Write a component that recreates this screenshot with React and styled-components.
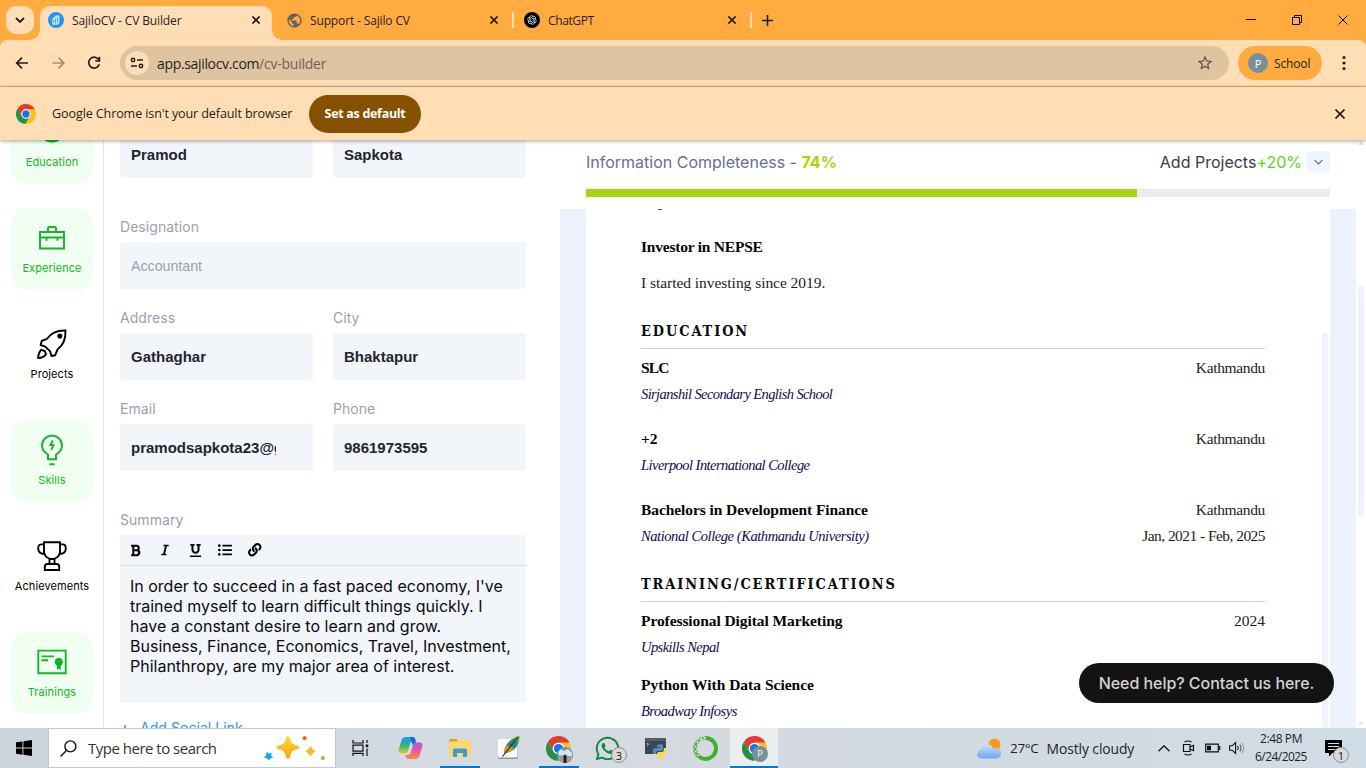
import React from 'react';
import styled, { createGlobalStyle, css } from 'styled-components';
import { FaBold, FaItalic, FaUnderline, FaListUl, FaLink, FaWhatsapp } from 'react-icons/fa';
import { MdPublic, MdStarBorder } from 'react-icons/md';
import { RiOpenaiFill } from 'react-icons/ri';
import { SiAnaconda } from 'react-icons/si';

const GlobalStyle = createGlobalStyle`
  *, *::before, *::after { box-sizing: border-box; }
  html, body { margin: 0; padding: 0; overflow: hidden; }
  svg { display: block; flex: none; }
`;

const ui = '"Open Sans", "Noto Sans", sans-serif';
const inter = 'Inter, "Liberation Sans", sans-serif';
const serif = '"Liberation Serif", serif';

const Screen = styled.div`
  width: 1366px;
  height: 768px;
  overflow: hidden;
  display: flex;
  flex-direction: column;
  background: #fff;
  font-family: ${ui};
`;

const Label = styled.span`
  font-size: ${p => p.$size || 12}px;
  letter-spacing: ${p => p.$ls || 0}px;
  color: ${p => p.$color || '#1f1f1f'};
  font-weight: ${p => p.$weight || 400};
  white-space: nowrap;
`;

/* ---------- browser chrome ---------- */

const TitleBar = styled.header`
  position: relative;
  z-index: 1;
  height: 40px;
  flex: none;
  display: flex;
  align-items: flex-start;
  background: #ffab40;
`;

const TabSearch = styled.button`
  width: 28px;
  height: 28px;
  margin: 6px 6px 0;
  padding: 0;
  border: 0;
  border-radius: 10px;
  background: #ffdeb5;
  display: grid;
  place-items: center;
`;

const Tab = styled.div`
  position: relative;
  height: 34px;
  width: ${p => p.$w}px;
  margin-top: 6px;
  padding: 0 0 6px ${p => p.$pad}px;
  display: flex;
  align-items: center;
  gap: ${p => p.$gap || 8}px;
  ${p => p.$active && css`
    background: #ffdeb5;
    border-radius: 10px 10px 0 0;
    &::before, &::after {
      content: '';
      position: absolute;
      bottom: 0;
      width: 10px;
      height: 10px;
    }
    &::before { left: -10px; background: radial-gradient(circle at 0 0, transparent 9.5px, #ffdeb5 10px); }
    &::after { right: -10px; background: radial-gradient(circle at 100% 0, transparent 9.5px, #ffdeb5 10px); }
  `}
`;

const TabClose = styled.span`
  margin-left: auto;
  margin-right: ${p => p.$right}px;
`;

const TabDivider = styled.span`
  width: 2px;
  height: 16px;
  margin-top: 12px;
  background: #ffdeb5;
`;

const NewTab = styled.span`
  margin: 15px 0 0 10px;
`;

const WindowButtons = styled.div`
  margin-left: auto;
  display: flex;
`;

const WindowButton = styled.span`
  width: 46px;
  height: 40px;
  display: grid;
  place-items: center;
`;

const Toolbar = styled.div`
  height: 47px;
  flex: none;
  display: flex;
  align-items: center;
  border-radius: 7px 7px 0 0;
  background: #ffdeb5;
  box-shadow: 0 -8px 0 #ffab40;
  border-bottom: 1px solid #ccb08d;
`;

const NavButton = styled.span`
  width: 36px;
  height: 36px;
  display: grid;
  place-items: center;
  color: ${p => (p.$muted ? '#a38e75' : '#1f1f1f')};
`;

const NavGroup = styled.div`
  display: flex;
  width: 120px;
  padding-left: 4px;
`;

const AddressBar = styled.div`
  width: 1109px;
  height: 34px;
  padding: 0 15px 0 5px;
  border-radius: 17px;
  background: #dfc4a1;
  display: flex;
  align-items: center;
`;

const SiteInfo = styled.span`
  width: 24px;
  height: 24px;
  margin-right: 8px;
  border-radius: 50%;
  background: #ffdeb5;
  display: grid;
  place-items: center;
`;

const Star = styled.span`
  margin-left: auto;
  color: #5b5349;
`;

const Profile = styled.div`
  width: 84px;
  height: 34px;
  margin: 0 13px 0 9px;
  padding-left: 10px;
  border-radius: 17px;
  background: #ffab40;
  display: flex;
  align-items: center;
  gap: 6px;
`;

const Avatar = styled.span`
  width: 20px;
  height: 20px;
  border-radius: 50%;
  background: #78909c;
  color: #fff;
  font-size: 11px;
  display: grid;
  place-items: center;
`;

const InfoBar = styled.div`
  position: relative;
  z-index: 3;
  height: 53px;
  flex: none;
  padding: 0 21px 0 16px;
  display: flex;
  align-items: center;
  background: #ffdeb5;
  box-shadow: 0 1px 4px rgba(0, 0, 0, 0.38);
`;

const InfoText = styled(Label)`
  width: 273px;
  padding-left: 16px;
`;

const DefaultButton = styled.button`
  width: 112px;
  height: 38px;
  padding: 0;
  border: 0;
  border-radius: 19px;
  background: #855100;
  color: #fff;
  font: 700 12.5px ${ui};
  letter-spacing: -0.3px;
`;

const InfoClose = styled.span`
  margin-left: auto;
`;

/* ---------- page ---------- */

const Page = styled.main`
  height: 588px;
  flex: none;
  display: flex;
  overflow: hidden;
  font-family: ${inter};
`;

const Sidebar = styled.nav`
  width: 104px;
  height: 588px;
  padding-left: 11px;
  border-right: 1px solid #e7e7ea;
  display: flex;
  flex-direction: column;
  gap: 24px;
  overflow: hidden;
`;

const Section = styled.div`
  width: 82px;
  height: 82px;
  flex: none;
  border-radius: 16px;
  background: ${p => (p.$done ? '#f0fff1' : 'transparent')};
  color: ${p => (p.$done ? '#16b427' : '#000')};
  display: flex;
  flex-direction: column;
  align-items: center;
  justify-content: flex-end;
  padding-bottom: 14px;
  gap: 7px;
  font-size: 11px;
  line-height: 16px;
  letter-spacing: 0.08px;
  white-space: nowrap;
  &:first-child { margin-top: -38px; }
`;

const SectionIcon = styled.span`
  height: 30px;
  display: flex;
  align-items: center;
`;

const Form = styled.form`
  width: 456px;
  height: 588px;
  padding: 0 34px 0 16px;
  overflow: hidden;
  display: flex;
  flex-direction: column;
`;

const FieldRow = styled.div`
  display: flex;
  flex: none;
  gap: 20px;
  margin-bottom: ${p => p.$after}px;
  &:first-child { margin-top: -9px; }
`;

const Field = styled.label`
  flex: 1;
  min-width: 0;
  display: flex;
  flex-direction: column;
  gap: 5px;
`;

const FieldName = styled.span`
  height: 20px;
  line-height: 20px;
  font-size: 14px;
  letter-spacing: 0.05px;
  color: #9a9fb2;
`;

const FieldBox = styled.span`
  height: 47px;
  padding: 0 37px 0 11px;
  border-radius: 3px;
  background: #f2f5fa;
  display: flex;
  align-items: center;
`;

const FieldValue = styled.span`
  width: 100%;
  overflow: hidden;
  white-space: nowrap;
  font: ${p => (p.$placeholder ? 400 : 700)} ${p => (p.$placeholder ? 14.2 : 15)}px "Liberation Sans", Arial, sans-serif;
  color: ${p => (p.$placeholder ? '#9a9fb2' : '#22252f')};
`;

const Editor = styled.div`
  height: 168px;
  flex: none;
  margin-top: 5px;
  background: #f2f5fa;
`;

const EditorTools = styled.div`
  height: 31px;
  padding-left: 8px;
  border-bottom: 1px solid #dadde2;
  display: flex;
  align-items: center;
`;

const Tool = styled.span`
  width: 30px;
  padding-left: ${p => p.$left || 0}px;
  display: flex;
  font-size: ${p => p.$size || 12}px;
`;

const EditorText = styled.p`
  margin: 0;
  padding: 10px 0 0 10px;
  font-size: 16px;
  line-height: 20px;
  color: #0b0b0d;
  white-space: nowrap;
`;

const AddLink = styled.a`
  margin-top: 15px;
  height: 20px;
  flex: none;
  display: flex;
  align-items: center;
  gap: 10px;
  color: #2b93f0;
  font-size: 14.1px;
  line-height: 20px;
  > svg { margin-top: 3px; }
`;

const Preview = styled.section`
  width: 796px;
  display: flex;
  flex-direction: column;
`;

const PreviewHead = styled.div`
  height: 69px;
  flex: none;
  padding: 11px 26px 0;
`;

const HeadRow = styled.div`
  height: 22px;
  display: flex;
  align-items: center;
  font-size: 16px;
  color: #6a6f8b;
`;

const Percent = styled.b`
  margin-left: 4.5px;
  font-weight: 700;
  color: #a5d610;
`;

const NextStep = styled.span`
  margin-left: auto;
  margin-right: 5px;
  color: #3a3b45;
  em { font-style: normal; color: #5bd51b; }
`;

const Expand = styled.span`
  width: 23px;
  height: 22px;
  border-radius: 4px;
  background: #eff6ff;
  display: grid;
  place-items: center;
`;

const Meter = styled.div`
  height: 8px;
  margin-top: 16px;
  background: linear-gradient(to right, #a5d610 551px, #e8ecef 551px);
`;

const Canvas = styled.div`
  height: 519px;
  padding: 0 26px;
  background: #eef2fc;
`;

const Paper = styled.article`
  height: 519px;
  background: #fff;
  display: flex;
  overflow: hidden;
  font-family: ${serif};
`;

const Cv = styled.div`
  width: 736px;
  height: 519px;
  padding: 0 57px 0 55px;
  display: flex;
  flex-direction: column;
`;

const PaperScroll = styled.span`
  width: 6px;
  margin-top: 124px;
  border-radius: 3px 3px 0 0;
  background: #eef3fc;
`;

const Clipped = styled.span`
  width: 4px;
  height: 1px;
  margin: 0 0 24px 17px;
  background: #55555c;
`;

const CvHeading = styled.h2`
  margin: 16px 0 6px;
  height: 37px;
  flex: none;
  border-bottom: 1px solid #d2d2d4;
  font: 700 14.4px/37px "DejaVu Serif Condensed", "DejaVu Serif", serif;
  letter-spacing: 1.93px;
  color: #08080a;
  white-space: nowrap;
`;

const CvLine = styled.div`
  height: ${p => p.$h || 26}px;
  flex: none;
  margin-top: ${p => p.$before || 0}px;
  line-height: 26px;
  display: flex;
  justify-content: space-between;
  font-size: 15.5px;
  color: #1d1d22;
  white-space: nowrap;
`;

const Strong = styled.b`
  color: #050507;
  letter-spacing: ${p => p.$ls || 0}px;
`;

const Place = styled.i`
  font-size: 14.5px;
  color: #0c0c4e;
  letter-spacing: ${p => p.$ls || 0}px;
`;

const Run = styled.span`
  letter-spacing: ${p => p.$ls || 0}px;
`;

const PageScroll = styled.div`
  width: 10px;
  height: 588px;
  padding: 1px 2px 2px;
  display: flex;
  flex-direction: column;
  align-items: center;
  justify-content: space-between;
`;

const PageThumb = styled.span`
  width: 6px;
  height: 231px;
  margin: 140px 0 auto;
  border-radius: 3px;
  background: #eef2fc;
`;

const HelpPill = styled.div`
  position: absolute;
  z-index: 4;
  left: 1079px;
  top: 663px;
  width: 255px;
  height: 40px;
  border-radius: 20px;
  background: #131313;
  color: #d3d3d3;
  font: 500 16px/40px ${inter};
  letter-spacing: -0.05px;
  text-align: center;
  white-space: nowrap;
`;

/* ---------- taskbar ---------- */

const Taskbar = styled.footer`
  height: 40px;
  flex: none;
  display: flex;
  background: linear-gradient(90deg, #ccd4de, #d5dbe1 35%, #d3d9df 60%, #d0dce6);
`;

const Slot = styled.div`
  position: relative;
  width: ${p => p.$w || 49}px;
  height: 40px;
  flex: none;
  display: flex;
  align-items: center;
  justify-content: center;
  background: ${p => (p.$active ? '#ebeff2' : 'transparent')};
  &::after {
    content: '';
    position: absolute;
    bottom: 0;
    left: 50%;
    width: ${p => p.$line || 0}px;
    height: 2px;
    transform: translateX(-50%);
    background: #0078d7;
  }
`;

const SearchBox = styled.div`
  width: 288px;
  height: 40px;
  padding: 0 10px 0 11px;
  border: 1px solid #c4c8cc;
  background: #fff;
  display: flex;
  align-items: center;
  gap: 11px;
  > svg:last-child { margin-left: auto; }
`;

const CountBadge = styled.span`
  position: absolute;
  right: ${p => p.$right}px;
  bottom: ${p => p.$bottom}px;
  width: 16px;
  height: 16px;
  border-radius: 50%;
  border: 1px solid #8e8e8e;
  background: #d9d9d9;
  color: #111;
  font-size: 11px;
  line-height: 1;
  display: grid;
  place-items: center;
`;

const UserBadge = styled(CountBadge)`
  border: 0;
  background: #78909c;
  color: #fff;
  font-size: 9.5px;
`;

const PhotoBadge = styled(CountBadge)`
  border: 0;
  overflow: hidden;
  background: none;
`;

const NoticeSlot = styled(Slot)`
  justify-content: flex-start;
  padding-left: 12px;
`;

const Tray = styled.div`
  margin-left: auto;
  display: flex;
  align-items: center;
`;

const Weather = styled.div`
  display: flex;
  align-items: center;
  width: 175px;
  gap: 8px;
`;

const Clock = styled.div`
  width: 64px;
  display: flex;
  flex-direction: column;
  align-items: center;
  line-height: 18px;
`;

/* ---------- drawings ---------- */

const Cross = ({ size = 8, w = 1.6, color = '#1f1f1f' }) => (
  <svg width={size} height={size} viewBox="0 0 8 8" fill="none" stroke={color} strokeWidth={w * 8 / size}>
    <path d="M.4.4l7.2 7.2M7.6.4L.4 7.6" />
  </svg>
);

const ChromeLogo = ({ size }) => (
  <svg width={size} height={size} viewBox="0 0 24 24">
    <path fill="#e33b2e" d="M12 6.5H22.7A12 12 0 0 0 1.7 5.9L7.24 14.75A5.5 5.5 0 0 1 12 6.5Z" />
    <path fill="#229342" d="M7.24 14.75L1.7 5.7A12 12 0 0 0 11.4 24l5.36-9.25a5.5 5.5 0 0 1-9.52 0Z" />
    <path fill="#fbc116" d="M16.76 14.75L11.4 24A12 12 0 0 0 22.6 6.5H12a5.5 5.5 0 0 1 4.76 8.25Z" />
    <circle cx="12" cy="12" r="5.6" fill="#fff" />
    <circle cx="12" cy="12" r="4.4" fill="#1a73e8" />
  </svg>
);

const SajiloIcon = () => (
  <svg width="16" height="16" viewBox="0 0 16 16">
    <circle cx="8" cy="8" r="8" fill="#2196f3" />
    <path d="M4.2 12.7V7.1L8 3.5h3.4v7.3l-1.8 2z" fill="#c9e6ff" />
    <path d="M5.7 11V7.6M7.5 11.5V6.5M9.4 10.8V5.4" stroke="#2196f3" strokeWidth=".8" />
  </svg>
);

const Tune = () => (
  <svg width="14" height="12" viewBox="0 0 14 12" fill="none" stroke="#1f1f1f" strokeWidth="1.5">
    <circle cx="3" cy="3" r="1.7" /><path d="M7 3h6M1 9h6" /><circle cx="11" cy="9" r="1.7" />
  </svg>
);

const Arrow = ({ flip }) => (
  <svg width="14" height="14" viewBox="0 0 14 14" fill="none" stroke="currentColor" strokeWidth="1.7">
    <path d={flip ? 'M1.500 7h11M7.500 1.700L12.800 7 7.500 12.300' : 'M13 7H2M7 1.700L1.700 7 7 12.300'} />
  </svg>
);

const Reload = () => (
  <svg width="14" height="14" viewBox="0 0 14 14" fill="none" stroke="currentColor" strokeWidth="1.7">
    <path d="M12 4.300A5.400 5.400 0 1 0 12.300 8.200M12.400.8v4.200H8.200" />
  </svg>
);

const Briefcase = () => (
  <svg width="28" height="26" viewBox="0 0 28 26" fill="none" stroke="currentColor" strokeWidth="1.9">
    <path d="M2 7h24v16.500H2zM2 12.500h24M10 7V3.600Q10 2 11.600 2h4.800Q18 2 18 3.600V7M8.500 12.500v3.300M19.500 12.500v3.300" />
  </svg>
);

const Rocket = () => (
  <svg width="30" height="30" viewBox="0 0 30 30" fill="none" stroke="currentColor" strokeWidth="1.9" strokeLinejoin="round">
    <path d="M28.500 1.500C21 1.200 14 4 10 9.800L4.800 11.800 3.600 16l4.600 1.600 5 4.800L14.400 27l3.800-.8 2.500-6C26.800 15.800 28.800 9.500 28.500 1.500Z" />
    <circle cx="22.800" cy="7" r="1.600" fill="currentColor" />
    <path d="M4.300 20.800C1.800 23 1.400 25.600 1 29c3.800-.2 6.400-1 8-3.800L7.800 22z" />
  </svg>
);

const Bulb = () => (
  <svg width="24" height="32" viewBox="0 0 24 32" fill="none" stroke="currentColor" strokeWidth="1.9">
    <path d="M8 25.300V20.600C4.200 18.400 2 15.400 2 11.600a10 10 0 0 1 20 0c0 3.800-2.200 6.800-6 9v4.700zM9.400 30.200h5.200" />
    <path d="M12.800 6.500l-2.300 4.600h3L11.200 15.800" />
  </svg>
);

const Trophy = () => (
  <svg width="30" height="30" viewBox="0 0 30 30" fill="none" stroke="currentColor" strokeWidth="1.9">
    <path d="M7 1.200h16v9.200c0 4.400-3.600 7.600-8 7.600s-8-3.200-8-7.600zM7 3.400H4.200C2 3.400 1.200 5 1.200 7.400c0 3.400 2.600 5.400 6.400 5.600M23 3.400h2.800c2.200 0 3 1.600 3 4 0 3.400-2.600 5.400-6.400 5.600M12.500 17.800v5M17.500 17.800v5M7.800 29v-3.400q0-2.600 2.600-2.600h9.200q2.600 0 2.600 2.600V29z" />
  </svg>
);

const Certificate = () => (
  <svg width="30" height="26" viewBox="0 0 30 26" fill="none" stroke="currentColor" strokeWidth="1.9">
    <path d="M1.300 1.600h27.400v22.600H1.300zM4.500 7.400H17M4.500 11.200h6.500" />
    <circle cx="21.800" cy="13" r="3.200" fill="currentColor" /><path d="M20.400 14v6.400l1.400-1.400 1.400 1.400V14" fill="currentColor" strokeWidth="1" />
  </svg>
);

const Cap = () => (
  <svg width="28" height="28" viewBox="0 0 28 28" fill="none" stroke="currentColor" strokeWidth="2">
    <circle cx="14" cy="12" r="11.500" /><path d="M8 21.500q6 2.500 12 0" strokeWidth="3" />
  </svg>
);

const WindowsLogo = () => (
  <svg width="16" height="16" viewBox="0 0 16 16">
    <path d="M0 2.300L6.500 1.400v6.200H0zM7.400 1.300L16 0v7.600H7.400zM0 8.500h6.500v6.200L0 13.800zM7.400 8.500H16V16l-8.600-1.200z" />
  </svg>
);

const Magnifier = () => (
  <svg width="17" height="17" viewBox="0 0 17 17" fill="none" stroke="#111" strokeWidth="1.4">
    <circle cx="10.400" cy="6.400" r="5.500" /><path d="M6.400 10.600L.6 16.400" />
  </svg>
);

const Sparkles = () => (
  <svg width="61" height="26" viewBox="0 0 61 26">
    <defs>
      <linearGradient id="gold" x1="0" y1="0" x2="0" y2="1">
        <stop offset="0" stopColor="#ffd83d" /><stop offset="1" stopColor="#f5a70c" />
      </linearGradient>
    </defs>
    <path fill="url(#gold)" d="M24 1q2 0 2.800 4.500 .8 3.500 4.400 4.500Q35.500 10.800 35.500 12.400t-4.300 2.400q-3.600 1-4.400 4.500-.8 4.500-2.800 4.500t-2.800-4.500q-.8-3.500-4.400-4.500-4.300-.8-4.300-2.400t4.300-2.400q3.600-1 4.400-4.500Q22 1 24 1Z" />
    <path fill="#fbb92a" d="M46.500 10.500q1.400 4.200 5.500 5.700-4.100 1.500-5.500 5.500-1.400-4-5.500-5.500 4.100-1.500 5.500-5.700Z" />
    <path fill="#14a7ea" d="M3.800 16.800l2.200 2 2.600-1-.4 3 2 2-2.800.5-1.400 2.500-1.500-2.400L1 22.700l1.800-2z" transform="translate(-1)" />
    <circle cx="40.600" cy="3.200" r="2.100" fill="#f1662b" />
    <circle cx="58.800" cy="23" r="2" fill="#80c342" />
  </svg>
);

const TaskView = () => (
  <svg width="17" height="16" viewBox="0 0 17 16" fill="none" stroke="#111" strokeWidth="1.2">
    <path d="M1 0v3h10V0M1 5.200h10v6H1zM1 16v-2.600h10V16M15 0v3M15 8.500V16" /><path d="M13.700 4.500h2.600v2.600h-2.600z" fill="#111" stroke="none" />
  </svg>
);

const Copilot = () => (
  <svg width="25" height="22" viewBox="0 0 25 22">
    <defs>
      <linearGradient id="cpA" x1="0" y1="0" x2="0" y2="1"><stop offset="0" stopColor="#1b9de8" /><stop offset=".5" stopColor="#25b58b" /><stop offset="1" stopColor="#f5c21a" /></linearGradient>
      <linearGradient id="cpB" x1="0" y1="0" x2="0" y2="1"><stop offset="0" stopColor="#a45cf0" /><stop offset=".5" stopColor="#ef5792" /><stop offset="1" stopColor="#ff8b43" /></linearGradient>
    </defs>
    <path fill="url(#cpA)" d="M8 0h6.500q2 0 2.600 2l.5 2h-3q-1.600 0-2.200 2l-2.500 8q-.8 2.500-3 2.500H3.500Q0 16.500.7 12.500L3.500 3Q4.500 0 8 0Z" />
    <path fill="url(#cpB)" d="M17 22h-6.500q-2 0-2.600-2l-.5-2h3q1.600 0 2.200-2l2.500-8q.8-2.500 3-2.500h3.400q3.500 0 2.800 4L21.500 19q-1 3-4.500 3Z" />
    <path fill="#1768d4" d="M12 0h2.500q2 0 2.600 2l.9 3.500q-2.400.2-3.200 3z" />
  </svg>
);

const Folder = () => (
  <svg width="22" height="19" viewBox="0 0 22 19">
    <path fill="#e0a018" d="M0 1q0-1 1-1h6.500l2 2.500H0z" />
    <path fill="#ffd766" d="M0 3h8l1.500-1.500H21q1 0 1 1V17q0 1-1 1H1q-1 0-1-1z" />
    <path fill="#3b9ae0" d="M4 18V11q0-1.500 1.500-1.500h11Q18 9.500 18 11v7h-4v-4H8v4z" />
  </svg>
);

const Feather = () => (
  <svg width="22" height="24" viewBox="0 0 22 24">
    <rect x="0" y="3" width="20" height="20" rx="1" fill="#8e9499" />
    <rect x="0" y="3" width="19.500" height="18.500" rx="1" fill="#fdfdfd" />
    <path d="M21.500 0q-8 2-12 7-3.500 4.500-3.500 10.500l2.500-.5q7-1.500 10-6.500Q21.500 6 21.500 0Z" fill="#58a829" />
    <path d="M15.500 3q-4.500 3-6.500 6.500l7.500 3q2.500-2.500 3.500-5.500z" fill="#247fa6" /><path d="M8.500 9.500q-2.500 4-2.500 8l2.500-.5q5-1.500 7-5z" fill="#e0902b" />
    <path d="M20 1L4.500 20.500" stroke="#2d3a1c" strokeWidth="1.200" fill="none" />
  </svg>
);

const PythonShell = () => (
  <svg width="23" height="23" viewBox="0 0 23 23">
    <path fill="#3a4750" d="M0 1h21v16H0z" /><path fill="#4e5f6b" d="M0 1h21v3H0z" /><path d="M2 6l1.500 1.200L2 8.500" stroke="#dfe5ea" fill="none" />
    <path fill="#4b8bc8" d="M12 8q3.500-1.500 6 0v4.500q0 1.500-1.500 1.500h-4Q11 14 11 16v1H8.500Q7 15 8 12.500q.5-1.500 2-1.500h5v-.7h-3z" />
    <path fill="#ffd94a" d="M18.800 11H21q1.500 2 .7 5-.5 1.500-2 1.500h-4v.7H18V21q-3 1.500-6 0v-4q0-2 1.500-2h3.500q1.800 0 1.800-2z" />
  </svg>
);

const ProfilePhoto = () => (
  <svg width="16" height="16" viewBox="0 0 16 16">
    <path d="M0 0h16v16H0z" fill="#5d93c9" />
    <path d="M1 5l3-3 3 2 4-2 4 4v4l-7-2-6 1z" fill="#d9e4ee" />
    <path d="M0 10l16-1v7H0z" fill="#b09a86" />
    <path d="M6.500 16V9.500L8 7l1.500 2.500V16z" fill="#16202e" />
  </svg>
);

const WeatherIcon = () => (
  <svg width="25" height="21" viewBox="0 0 25 21">
    <defs><linearGradient id="cloud" x1="0" y1="0" x2="0" y2="1"><stop offset="0" stopColor="#c7ddfd" /><stop offset="1" stopColor="#77a5ee" /></linearGradient></defs>
    <circle cx="17.500" cy="6.500" r="6" fill="#f79a1e" />
    <path fill="url(#cloud)" d="M4.800 11.500Q5.500 6.500 10.500 6.500q4.400 0 5.800 4.200 1-.7 2.400-.7 5.300.5 5.300 5.500 0 4.800-5 5H5Q0 20.300 0 16q0-4.200 4.800-4.500Z" />
  </svg>
);

const MeetNow = () => (
  <svg width="13" height="16" viewBox="0 0 13 16" fill="none" stroke="#111" strokeWidth="1.2">
    <path d="M1.500 4.500h6.500v7H1.500zM8 7l3.500-1.500v5L8 9M2.500 2Q6 0 9.500 2M2.500 14Q6 16 9.500 14" />
  </svg>
);

const Battery = () => (
  <svg width="16" height="10" viewBox="0 0 16 10" fill="none" stroke="#111" strokeWidth="1.2">
    <path d="M.7 1.200h12.600v7.600H.7zM14.700 3v4" /><path d="M2 2.700h4v4.600H2z" fill="#111" stroke="none" />
  </svg>
);

const Speaker = () => (
  <svg width="17" height="14" viewBox="0 0 17 14" fill="none" stroke="#111" strokeWidth="1.1">
    <path d="M.6 4.800h2.600L6.600 1.500v11L3.200 9.200H.6zM8.600 5q1.200 2 0 4" /><path d="M10.800 3.500q2.300 3.500 0 7" stroke="#555" /><path d="M13 2q3.500 5 0 10" stroke="#999" />
  </svg>
);

const Notice = () => (
  <svg width="17" height="17" viewBox="0 0 17 17">
    <path d="M0 0h17v13H7.500L4 16.500V13H0z" fill="#050505" /><path d="M3 3.500h11M3 6.500h11M3 9.500h7" stroke="#d0dce6" />
  </svg>
);

/* ---------- data ---------- */

const sections = [
  { name: 'Education', icon: <Cap />, done: true },
  { name: 'Experience', icon: <Briefcase />, done: true },
  { name: 'Projects', icon: <Rocket /> },
  { name: 'Skills', icon: <Bulb />, done: true },
  { name: 'Achievements', icon: <Trophy /> },
  { name: 'Trainings', icon: <Certificate />, done: true },
];

const TextField = ({ name, value, placeholder }) => (
  <Field>
    {name && <FieldName>{name}</FieldName>}
    <FieldBox><FieldValue $placeholder={!!placeholder}>{value || placeholder}</FieldValue></FieldBox>
  </Field>
);

export default function App() {
  return (
    <Screen>
      <GlobalStyle />
      <TitleBar>
        <TabSearch>
          <svg width="10" height="6" viewBox="0 0 10 6" fill="none" stroke="#1f1f1f" strokeWidth="1.8"><path d="M1 1l4 4 4-4" /></svg>
        </TabSearch>
        <Tab $w={232} $pad={8} $active>
          <SajiloIcon />
          <Label $ls={-0.14}>SajiloCV - CV Builder</Label>
          <TabClose $right={12}><Cross /></TabClose>
        </Tab>
        <Tab $w={240} $pad={14} $gap={7}>
          <MdPublic size={17} color="#5f6368" />
          <Label $ls={-0.14}>Support - Sajilo CV</Label>
          <TabClose $right={14}><Cross /></TabClose>
        </Tab>
        <TabDivider />
        <Tab $w={236} $pad={10}>
          <svg width="16" height="16" viewBox="0 0 16 16"><circle cx="8" cy="8" r="8" fill="#000" /><RiOpenaiFill x="2.5" y="2.5" size={11} color="#fff" /></svg>
          <Label $ls={-0.38}>ChatGPT</Label>
          <TabClose $right={14}><Cross /></TabClose>
        </Tab>
        <TabDivider />
        <NewTab>
          <svg width="11" height="11" viewBox="0 0 11 11" stroke="#1f1f1f" strokeWidth="1.6"><path d="M5.500 0v11M0 5.500h11" /></svg>
        </NewTab>
        <WindowButtons>
          <WindowButton><svg width="10" height="10" viewBox="0 0 10 10" stroke="#000"><path d="M0 4.500h10" /></svg></WindowButton>
          <WindowButton><svg width="10" height="10" viewBox="0 0 10 10" stroke="#000" fill="none"><path d="M.5 2.500h7v7h-7zM2.500 2.500v-2h7v7h-2" /></svg></WindowButton>
          <WindowButton><Cross size={10} w={1} color="#000" /></WindowButton>
        </WindowButtons>
      </TitleBar>

      <Toolbar>
        <NavGroup>
          <NavButton><Arrow /></NavButton>
          <NavButton $muted><Arrow flip /></NavButton>
          <NavButton><Reload /></NavButton>
        </NavGroup>
        <AddressBar>
          <SiteInfo><Tune /></SiteInfo>
          <Label $size={14} $ls={-0.34}>app.sajilocv.com</Label>
          <Label $size={14} $ls={-0.24} $color="#6d6256">/cv-builder</Label>
          <Star><MdStarBorder size={18} /></Star>
        </AddressBar>
        <Profile>
          <Avatar>P</Avatar>
          <Label $ls={-0.15}>School</Label>
        </Profile>
        <svg width="18" height="16" viewBox="0 0 18 16" fill="#1f1f1f"><circle cx="9" cy="2.500" r="1.600" /><circle cx="9" cy="8" r="1.600" /><circle cx="9" cy="13.500" r="1.600" /></svg>
      </Toolbar>

      <InfoBar>
        <ChromeLogo size={20} />
        <InfoText $size={12.6} $ls={-0.13}>Google Chrome isn't your default browser</InfoText>
        <DefaultButton>Set as default</DefaultButton>
        <InfoClose><Cross size={10} w={1.6} /></InfoClose>
      </InfoBar>

      <Page>
        <Sidebar>
          {sections.map(s => (
            <Section key={s.name} $done={s.done}><SectionIcon>{s.icon}</SectionIcon><span>{s.name}</span></Section>
          ))}
        </Sidebar>

        <Form>
          <FieldRow $after={39}>
            <TextField value="Pramod" />
            <TextField value="Sapkota" />
          </FieldRow>
          <FieldRow $after={19}><TextField name="Designation" placeholder="Accountant" /></FieldRow>
          <FieldRow $after={19}>
            <TextField name="Address" value="Gathaghar" />
            <TextField name="City" value="Bhaktapur" />
          </FieldRow>
          <FieldRow $after={39}>
            <TextField name="Email" value="pramodsapkota23@gmail.com" />
            <TextField name="Phone" value="9861973595" />
          </FieldRow>
          <FieldName>Summary</FieldName>
          <Editor>
            <EditorTools>
              <Tool $left={1} $size={13}><FaBold /></Tool>
              <Tool $left={1}><FaItalic /></Tool>
              <Tool $left={1} $size={13}><FaUnderline /></Tool>
              <Tool $size={14}><FaListUl /></Tool>
              <Tool $size={13.5}><FaLink /></Tool>
            </EditorTools>
            <EditorText>
              In order to succeed in a fast paced economy, I've<br />
              trained myself to learn difficult things quickly. I<br />
              have a constant desire to learn and grow.<br />
              Business, Finance, Economics, Travel, Investment,<br />
              Philanthropy, are my major area of interest.
            </EditorText>
          </Editor>
          <AddLink>
            <svg width="10" height="10" viewBox="0 0 10 10" stroke="currentColor" strokeWidth="1.6"><path d="M5 0v10M0 5h10" /></svg>
            Add Social Link
          </AddLink>
        </Form>

        <Preview>
          <PreviewHead>
            <HeadRow>
              <span>Information Completeness -</span><Percent>74%</Percent>
              <NextStep>Add Projects<em>+20%</em></NextStep>
              <Expand><svg width="9" height="6" viewBox="0 0 9 6" fill="none" stroke="#6a6f8b" strokeWidth="1.2"><path d="M.5.8l4 4 4-4" /></svg></Expand>
            </HeadRow>
            <Meter />
          </PreviewHead>
          <Canvas>
            <Paper>
              <Cv>
                <Clipped />
                <CvLine><Strong $ls={-0.22}>Investor in NEPSE</Strong></CvLine>
                <CvLine $before={10}><Run $ls={-0.04}>I started investing since 2019.</Run></CvLine>
                <CvHeading>EDUCATION</CvHeading>
                <CvLine><Strong $ls={-0.9}>SLC</Strong><Run $ls={-0.35}>Kathmandu</Run></CvLine>
                <CvLine><Place $ls={-0.6}>Sirjanshil Secondary English School</Place></CvLine>
                <CvLine $before={19}><Strong $ls={-0.2}>+2</Strong><Run $ls={-0.35}>Kathmandu</Run></CvLine>
                <CvLine><Place $ls={-0.54}>Liverpool International College</Place></CvLine>
                <CvLine $before={19}><Strong $ls={-0.08}>Bachelors in Development Finance</Strong><Run $ls={-0.35}>Kathmandu</Run></CvLine>
                <CvLine><Place $ls={-0.43}>National College (Kathmandu University)</Place><Run $ls={-0.55}>Jan, 2021 - Feb, 2025</Run></CvLine>
                <CvHeading>TRAINING/CERTIFICATIONS</CvHeading>
                <CvLine><Strong $ls={-0.08}>Professional Digital Marketing</Strong><Run>2024</Run></CvLine>
                <CvLine><Place $ls={-0.55}>Upskills Nepal</Place></CvLine>
                <CvLine $before={12}><Strong>Python With Data Science</Strong></CvLine>
                <CvLine $h={25}><Place $ls={-0.5}>Broadway Infosys</Place></CvLine>
              </Cv>
              <PaperScroll />
            </Paper>
          </Canvas>
        </Preview>
        <PageScroll>
          <svg width="6" height="4" viewBox="0 0 6 4" fill="#dfe6f7"><path d="M3 0l3 4H0z" /></svg>
          <PageThumb />
          <svg width="6" height="4" viewBox="0 0 6 4" fill="#dfe6f7"><path d="M3 4L0 0h6z" /></svg>
        </PageScroll>
      </Page>

      <HelpPill>Need help? Contact us here.</HelpPill>

      <Taskbar>
        <Slot $w={48}><WindowsLogo /></Slot>
        <SearchBox><Magnifier /><Label $size={15} $ls={-0.5} $color="#333">Type here to search</Label><Sparkles /></SearchBox>
        <Slot $w={49}><TaskView /></Slot>
        <Slot $w={51}><Copilot /></Slot>
        <Slot $w={48} $line={40}><Folder /></Slot>
        <Slot $w={50}><Feather /></Slot>
        <Slot $w={49} $line={40}><ChromeLogo size={25} /><PhotoBadge $right={10} $bottom={5}><ProfilePhoto /></PhotoBadge></Slot>
        <Slot $w={49}><FaWhatsapp size={27} color="#18864b" /><CountBadge $right={5} $bottom={5}>3</CountBadge></Slot>
        <Slot $w={48}><PythonShell /></Slot>
        <Slot $w={50}><SiAnaconda size={25} color="#43b02a" /></Slot>
        <Slot $w={48} $line={48} $active><ChromeLogo size={25} /><UserBadge $right={10} $bottom={6}>P</UserBadge></Slot>
        <Tray>
          <Weather>
            <WeatherIcon />
            <Label $size={13.5} $ls={-0.3}>27°C</Label>
            <Label $size={13.9} $ls={-0.1}>Mostly cloudy</Label>
          </Weather>
          <Slot $w={23}><svg width="12" height="7" viewBox="0 0 12 7" fill="none" stroke="#111" strokeWidth="1.3"><path d="M.5 6.300L6 .8l5.500 5.500" /></svg></Slot>
          <Slot $w={26}><MeetNow /></Slot>
          <Slot $w={24}><Battery /></Slot>
          <Slot $w={24}><Speaker /></Slot>
          <Clock>
            <Label $size={12} $ls={-0.4}>2:48 PM</Label>
            <Label $size={12} $ls={-0.55}>6/24/2025</Label>
          </Clock>
          <NoticeSlot $w={53}><Notice /><CountBadge $right={17} $bottom={5}>1</CountBadge></NoticeSlot>
        </Tray>
      </Taskbar>
    </Screen>
  );
}
